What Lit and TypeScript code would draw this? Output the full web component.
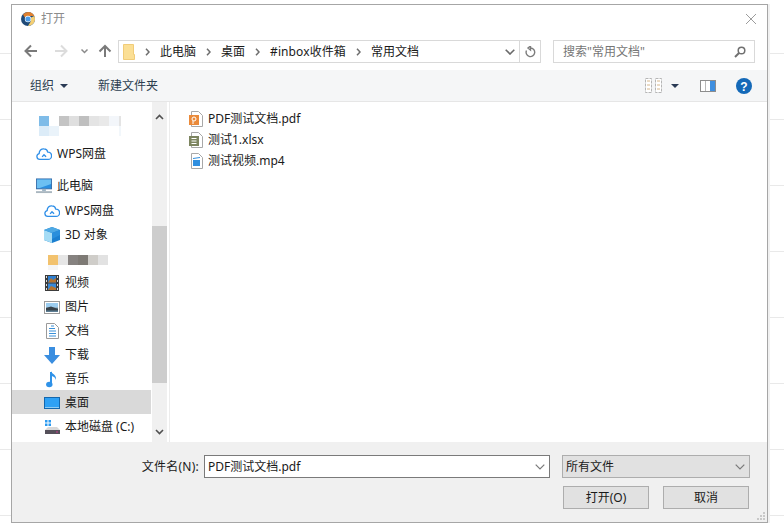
import { LitElement, html, css, svg } from "lit";
import { customElement } from "lit/decorators.js";

const cloud = html`<svg width="17" height="14" viewBox="0 0 17 14"><path d="M4 12.800a3.200 3.200 0 0 1-.6-6.300A4.700 4.700 0 0 1 8.500 1.500a4.200 4.200 0 0 1 4 3.500 3.900 3.900 0 0 1 .3 7.800zM6.500 10 8.500 7.800l2.200 2.200" fill="#fff" stroke="#2f8fe8" stroke-width="1.400" stroke-linejoin="round"/></svg>`;
const pc = html`<svg width="17" height="16" viewBox="0 0 17 16"><rect x="0.500" y="0.500" width="16" height="10.500" fill="#2a8fe0" stroke="#3a6ea8"/><path d="M1 1h15v5L4 10H1z" fill="#6cc0f2"/><rect x="6.500" y="11" width="4" height="2.500" fill="#9fb4c4"/><rect y="13.500" width="17" height="2" fill="#a9b6bf"/></svg>`;
const cube = html`<svg width="16" height="16" viewBox="0 0 16 16"><path d="M8 0l8 3v10l-8 3-8-3V3z" fill="#1b7fd0"/><path d="M0 3l8 3v10l-8-3z" fill="#a5dcf5"/><path d="M8 0l8 3-8 3-8-3z" fill="#4ea9e4"/><path d="M8 6l8-3v5l-8 4z" fill="#2a8fdc"/></svg>`;
const film = html`<svg width="14" height="16" viewBox="0 0 14 16"><rect width="14" height="16" fill="#3c3c3c"/><rect x="3" y="1" width="8" height="6.500" fill="#2f7fd0"/><rect x="3" y="8.500" width="8" height="6.500" fill="#3a8ad8"/><path d="M3 7.500 6 3l2 2 3-2v4.500zM3 15l3-4 5 2v2z" fill="#b8742c"/><path d="M1 1h1v2H1zM1 5h1v2H1zM1 9h1v2H1zM1 13h1v2H1zM12 1h1v2h-1zM12 5h1v2h-1zM12 9h1v2h-1zM12 13h1v2h-1z" fill="#ddd"/></svg>`;
const pic = html`<svg width="16" height="13" viewBox="0 0 16 13"><rect x="0.500" y="0.500" width="15" height="12" fill="#fff" stroke="#9b9b9b"/><rect x="2" y="2" width="12" height="4.500" fill="#9ccdf0"/><rect x="2" y="6.500" width="12" height="4.500" fill="#5d7f95"/><path d="M2 7l5-1.500L14 8v1.500H2z" fill="#37424a"/></svg>`;
const doc = html`<svg width="13" height="16" viewBox="0 0 13 16"><path d="M.5.500h8l4 4v11H.5z" fill="#fff" stroke="#9a9a9a"/><path d="M5 3h3M3 5.500h6M3 8h7M3 10.500h7M3 13h7" stroke="#3a90d8" fill="none"/></svg>`;
const down = html`<svg width="16" height="17" viewBox="0 0 16 17"><path d="M5 0h6v8h5l-8 9-8-9h5z" fill="#3a8ee0"/></svg>`;
const note = html`<svg width="12" height="17" viewBox="0 0 12 17"><path d="M5 1v11.500" stroke="#2f92e8" stroke-width="2" fill="none"/><ellipse cx="3.300" cy="13.500" rx="3.200" ry="2.700" fill="#2f92e8"/><path d="M5 0c.5 3 6 3.500 5 9-.8-3-3-4-5-4z" fill="#2f92e8"/></svg>`;
const desk = html`<svg width="16" height="12" viewBox="0 0 16 12"><rect x="0.500" y="0.500" width="15" height="11" fill="#2ea1f5" stroke="#1467ad"/><rect x="1" y="10" width="14" height="1" fill="#8fcdf5"/></svg>`;
const drive = html`<svg width="15" height="14" viewBox="0 0 15 14"><path d="M0 0h2.500v2.500H0zM3.500 0H6v2.500H3.500zM0 3.500h2.500V6H0zM3.500 3.500H6V6H3.500z" fill="#2b9af0"/><path d="M3 7h9l3 3H0z" fill="#d8d8d8"/><rect y="10" width="15" height="4" fill="#55505a"/><rect x="11" y="11.500" width="2" height="1" fill="#c43a8a"/></svg>`;

const cells = (rows: [number, number, number, string][]) =>
  rows.map(([x, y, w, c]) => svg`<rect x=${x} y=${y} width=${w} height="10" fill=${c}/>`);

const chev = html`<svg class="chev" width="5" height="8" viewBox="0 0 5 8"><path d="M1 .800 4 4 1 7.200" fill="none" stroke="#6e6e6e" stroke-width="1.500"/></svg>`;
const ddn = (c: string, w = 1.2) => html`<svg width="10" height="6" viewBox="0 0 10 6"><path d="M.7.700 5 5 9.300.7" fill="none" stroke=${c} stroke-width=${w}/></svg>`;
const fileIcon = (inner: unknown) => html`<svg width="14" height="16" viewBox="0 0 14 16"><path d="M2.500.500h7l4 4v11h-11z" fill="#fff" stroke="#a8a8a8"/>${inner}</svg>`;

@customElement("app-root")
export class AppRoot extends LitElement {
  static styles = css`
    :host {
      display: block; width: 784px; height: 529px; box-sizing: border-box; padding: 4px 0 0 11px;
      overflow: hidden; color: #1a1a1a; font: 12px/16px "Noto Sans", "Noto Sans CJK SC", sans-serif;
      background: #fff linear-gradient(#e9e9e9 1px, transparent 1px) 0 53px / 100% 66px;
    }
    .dialog {
      position: relative; width: 757px; height: 519px; box-sizing: border-box; background: #fff;
      border: 1px solid #a6a6a6; box-shadow: 2px 0 0 #f1f1f1; display: flex; flex-direction: column;
    }
    .title { height: 28px; display: flex; align-items: center; padding: 0 10px 0 9px; color: #8c8c8c; flex: none; }
    .title span { margin-left: 6px; flex: 1; }
    .nav { height: 37px; box-sizing: border-box; padding: 7px 12px 7px 0; display: flex; flex: none; }
    .nav > svg { flex: none; }
    .addr {
      width: 423px; height: 23px; box-sizing: border-box; border: 1px solid #d9d9d9; display: flex; align-items: center;
      padding-left: 4px; gap: 10px; flex: none;
    }
    .addr .spacer { flex: 1; }
    .addr .inbox { letter-spacing: 0.1px; }
    .addr .dd { margin-right: -6px; display: flex; }
    .addr .rf { border-left: 1px solid #d9d9d9; width: 20px; height: 21px; display: flex; align-items: center; justify-content: center; }
    .search {
      margin-left: 12px; flex: 1; box-sizing: border-box; border: 1px solid #d9d9d9; height: 23px; display: flex;
      align-items: center; justify-content: space-between; padding: 0 8px 0 9px; color: #767676;
    }
    .bar {
      height: 32px; box-sizing: border-box; background: #f5f6f7; border-bottom: 1px solid #e6e6e6; flex: none; display: flex;
      align-items: center; padding: 0 15px 0 18px; color: #2c3e50;
    }
    .caret { width: 0; height: 0; border: 4px solid transparent; border-top: 4px solid #2a3a55; border-bottom: 0; margin-left: 6px; }
    .new { margin-left: 30px; flex: 1; }
    .bar .caret2 { margin: 0 21px 0 9px; }
    .bar .pane { margin-right: 20px; }
    .main { height: 340px; display: flex; flex: none; }
    .side { width: 140px; flex: none; padding-top: 14px; box-sizing: border-box; display: flex; flex-direction: column; overflow: hidden; }
    .mos { height: 25px; flex: none; }
    .mos svg { display: block; }
    .row { height: 24px; flex: none; box-sizing: border-box; display: flex; align-items: center; white-space: nowrap; padding-top: 2px; }
    .row .ic { width: 16px; flex: none; display: flex; justify-content: center; margin-right: 5px; }
    .l1 { padding-left: 24px; }
    .l2 { padding-left: 32px; }
    .pc { margin: 8px 0 1px; }
    .mos2 { padding-top: 0; }
    .sel { background: #d9d9d9; margin-right: 1px; }
    .sb { width: 15px; flex: none; background: #f0f0f0; display: flex; flex-direction: column; align-items: center; }
    .sb .up { height: 124px; flex: none; padding-top: 6px; box-sizing: border-box; }
    .sb .thumb { height: 157px; width: 15px; background: #cdcdcd; flex: none; }
    .sb .dn { flex: 1; display: flex; align-items: flex-end; padding-bottom: 7px; }
    .files { margin-left: 2px; border-left: 1px solid #ececec; flex: 1; padding: 6px 0 0 19px; }
    .file { height: 21px; display: flex; align-items: center; gap: 5px; }
    .foot { background: #f0f0f0; flex: 1; box-sizing: border-box; padding: 13px 17px 0 0; }
    .f1 { display: flex; align-items: center; justify-content: flex-end; }
    .f1 label { margin-right: 5px; letter-spacing: 0.25px; }
    .inp {
      width: 346px; height: 23px; box-sizing: border-box; border: 1px solid #7a7a7a; background: #fff; display: flex;
      align-items: center; justify-content: space-between; padding: 0 4px 0 3px; margin-right: 12px;
    }
    .sel2 {
      width: 188px; height: 23px; box-sizing: border-box; border: 1px solid #adadad; background: #e1e1e1; display: flex;
      align-items: center; justify-content: space-between; padding: 0 4px 0 3px;
    }
    .f2 { display: flex; justify-content: flex-end; gap: 14px; margin: 8px 1px 0 0; }
    .btn { width: 86px; height: 23px; box-sizing: border-box; border: 1px solid #adadad; background: #e1e1e1; display: flex; align-items: center; justify-content: center; }
    .grip { position: absolute; right: 1px; bottom: 1px; display: block; }
  `;

  render() {
    return html`<div class="dialog">
      <div class="title">
        <svg width="14" height="14" viewBox="0 0 14 14"><circle cx="7" cy="7" r="7" fill="#1f4a78"/><path d="M7 0a7 7 0 0 1 6.300 4H6.500A3.200 3.200 0 0 0 3.800 5.500L2 2.400A7 7 0 0 1 7 0z" fill="#e0812f"/><path d="M13.300 4A7 7 0 0 1 7 14l3-5V5.500z" fill="#f5cf73"/><circle cx="7" cy="7" r="3.200" fill="#fff"/><circle cx="7" cy="7" r="2.600" fill="#4a9cea"/></svg>
        <span>打开</span>
        <svg width="12" height="12" viewBox="0 0 12 12"><path d="M1 1l10 10M11 1 1 11" stroke="#9c9c9c" fill="none"/></svg>
      </div>
      <div class="nav">
        <svg width="106" height="23" viewBox="0 0 106 23">
          <path d="M25 11H14M19 5.500 13.500 11l5.500 5.500" stroke="#7a7a7a" stroke-width="2" fill="none"/>
          <path d="M43 11h11M49 5.500 54.500 11 49 16.500" stroke="#dcdcdc" stroke-width="2" fill="none"/>
          <path d="M69.500 9.500 72.500 12.500 75.500 9.500" stroke="#8a8a8a" stroke-width="1.500" fill="none"/>
          <path d="M93 17V6M87.500 11.500 93 6l5.500 5.500" stroke="#7a7a7a" stroke-width="2" fill="none"/>
        </svg>
        <div class="addr">
          <svg width="12" height="16" viewBox="0 0 12 16"><path d="M.500.500h10v10h1v5h-11z" fill="#fbdf95" stroke="#f1cc78"/></svg>
          ${chev}<span>此电脑</span>${chev}<span>桌面</span>${chev}<span class="inbox">#inbox收件箱</span>${chev}<span>常用文档</span>
          <i class="spacer"></i>
          <span class="dd">${ddn("#6a6a6a", 1.6)}</span>
          <span class="rf"><svg width="12" height="12" viewBox="0 0 12 12"><path d="M6.500 2A4.300 4.300 0 1 1 2.500 4.500M6.500 0v4L4 2z" fill="none" stroke="#7c7c7c" stroke-width="1.400"/></svg></span>
        </div>
        <div class="search"><span>搜索"常用文档"</span>
          <svg width="12" height="12" viewBox="0 0 12 12"><circle cx="7.500" cy="4.500" r="3.300" fill="none" stroke="#707070" stroke-width="1.500"/><path d="M5 7 1 11" stroke="#707070" stroke-width="2"/></svg>
        </div>
      </div>
      <div class="bar">
        <span>组织</span><i class="caret"></i>
        <span class="new">新建文件夹</span>
        <svg width="17" height="15" viewBox="0 0 17 15"><path d="M.500.500h6v14h-6zM10.500.500h6v14h-6z" fill="#fff" stroke="#b5b5b5" stroke-dasharray="3 1"/><path d="M2 3h3M2 7h3M2 11h3M12 3h3M12 7h3M12 11h3" stroke="#d6b78c"/></svg>
        <i class="caret caret2"></i>
        <svg class="pane" width="16" height="12" viewBox="0 0 16 12"><rect x="0.500" y="0.500" width="15" height="11" fill="#fff" stroke="#8d8d8d"/><rect x="10" y="1" width="5" height="10" fill="#3f8fe0"/><path d="M5.500 1v10" stroke="#b8b8b8"/></svg>
        <svg width="16" height="16" viewBox="0 0 16 16"><circle cx="8" cy="8" r="8" fill="#1469b8"/><text x="8" y="12.500" text-anchor="middle" font-size="12" font-weight="700" fill="#fff" font-family="Liberation Sans">?</text></svg>
      </div>
      <div class="main">
        <div class="side">
          <div class="mos"><svg width="110" height="25" viewBox="0 0 110 25">${cells([
            [27, 0, 10, "#7fbce8"], [47, 0, 10, "#c4c4c4"], [57, 0, 10, "#dfdfdf"], [67, 0, 10, "#bfbfbf"], [77, 0, 10, "#e4e4e4"], [87, 0, 10, "#e9e9e9"], [97, 0, 10, "#f3f6fa"], [107, 0, 2, "#e4e4e4"],
            [27, 10, 10, "#dcecf8"], [37, 10, 10, "#eaf3fa"], [107, 10, 2, "#f2f7fb"],
          ])}</svg></div>
          <div class="row l1"><span class="ic">${cloud}</span>WPS网盘</div>
          <div class="row l1 pc"><span class="ic">${pc}</span>此电脑</div>
          <div class="row l2"><span class="ic">${cloud}</span>WPS网盘</div>
          <div class="row l2"><span class="ic">${cube}</span>3D 对象</div>
          <div class="row mos2"><svg width="110" height="24" viewBox="0 0 110 24">${cells([
            [36, 9, 10, "#f2c26e"], [46, 9, 10, "#e6e6e6"], [56, 9, 10, "#868280"], [66, 9, 10, "#7e7a75"], [76, 9, 10, "#cfcdc9"], [86, 9, 10, "#e2e2e2"], [36, 19, 10, "#f5f5f5"],
          ])}</svg></div>
          <div class="row l2"><span class="ic">${film}</span>视频</div>
          <div class="row l2"><span class="ic">${pic}</span>图片</div>
          <div class="row l2"><span class="ic">${doc}</span>文档</div>
          <div class="row l2"><span class="ic">${down}</span>下载</div>
          <div class="row l2"><span class="ic">${note}</span>音乐</div>
          <div class="row l2 sel"><span class="ic">${desk}</span>桌面</div>
          <div class="row l2"><span class="ic">${drive}</span>本地磁盘 (C:)</div>
        </div>
        <div class="sb">
          <div class="up"><svg width="9" height="6" viewBox="0 0 9 6"><path d="M1 5 4.500 1.500 8 5" fill="none" stroke="#505050" stroke-width="1.600"/></svg></div>
          <div class="thumb"></div>
          <div class="dn"><svg width="9" height="6" viewBox="0 0 9 6"><path d="M1 1 4.500 4.500 8 1" fill="none" stroke="#505050" stroke-width="1.600"/></svg></div>
        </div>
        <div class="files">
          <div class="file">${fileIcon(svg`<rect x="0" y="4" width="10" height="10" fill="#ea8a3a"/><circle cx="5" cy="8" r="2" fill="none" stroke="#fff"/><path d="M4 10v3" stroke="#fff"/>`)}<span>PDF测试文档.pdf</span></div>
          <div class="file">${fileIcon(svg`<rect x="0" y="4" width="10" height="10" fill="#7d8560"/><path d="M2.500 6.500h5M2.500 9h5M2.500 11.500h5" stroke="#fff"/>`)}<span>测试1.xlsx</span></div>
          <div class="file">${fileIcon(svg`<rect x="4" y="7" width="7" height="6" fill="#2f8fe0"/><path d="M4 5.500l7-1" stroke="#2f8fe0"/>`)}<span>测试视频.mp4</span></div>
        </div>
      </div>
      <div class="foot">
        <div class="f1">
          <label>文件名(N):</label>
          <div class="inp"><span>PDF测试文档.pdf</span>${ddn("#7a7a7a")}</div>
          <div class="sel2"><span>所有文件</span>${ddn("#7a7a7a")}</div>
        </div>
        <div class="f2"><div class="btn">打开(O)</div><div class="btn">取消</div></div>
      </div>
      <svg class="grip" width="10" height="10" viewBox="0 0 10 10"><path d="M7 1h2v2H7zM4 4h2v2H4zM7 4h2v2H7zM1 7h2v2H1zM4 7h2v2H4zM7 7h2v2H7z" fill="#c8c8c8"/></svg>
    </div>`;
  }
}
